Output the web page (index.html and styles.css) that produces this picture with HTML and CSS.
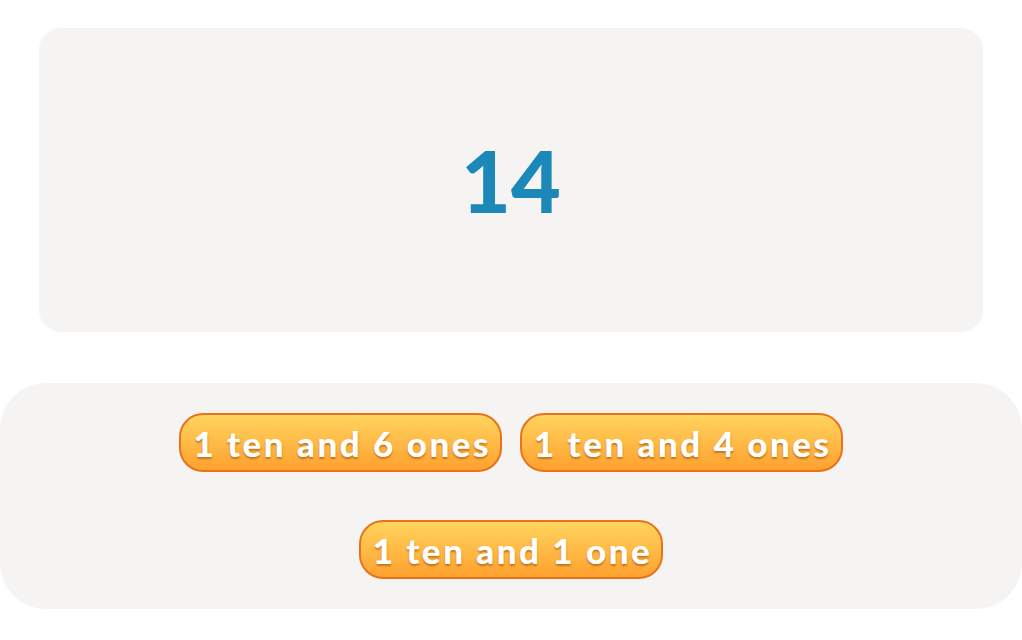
FILE: index.html
```html
<!DOCTYPE html>
<html lang="en">
<head>
<meta charset="utf-8">
<title>Place value</title>
<link rel="stylesheet" href="styles.css">
</head>
<body>
  <main class="page">
    <section class="prompt">
      <div class="number">14</div>
    </section>
    <section class="choices">
      <div class="row">
        <button class="choice">1 ten and 6 ones</button>
        <button class="choice">1 ten and 4 ones</button>
      </div>
      <div class="row">
        <button class="choice">1 ten and 1 one</button>
      </div>
    </section>
  </main>
</body>
</html>
```

FILE: styles.css
```css
html, body {
  margin: 0;
  padding: 0;
  background: #ffffff;
}

.page {
  width: 1022px;
  height: 640px;
  padding-top: 28px;
  box-sizing: border-box;
  font-family: "Lato", "Open Sans", sans-serif;
}

.prompt {
  margin: 0 39px;
  height: 304px;
  background: #f6f4f3;
  border-radius: 22px;
  display: flex;
  align-items: center;
  justify-content: center;
}

.number {
  font-size: 86px;
  font-weight: 900;
  color: #1b88b7;
  line-height: 1;
}

.choices {
  margin-top: 51px;
  height: 226px;
  background: #f6f4f3;
  border-radius: 46px;
  display: flex;
  flex-direction: column;
  align-items: center;
  padding-top: 30px;
  box-sizing: border-box;
  gap: 48px;
}

.row {
  display: flex;
  gap: 18px;
  justify-content: center;
}

.choice {
  height: 59px;
  padding: 0 9px 0 12px;
  border: 2.5px solid #e8731c;
  border-radius: 24px;
  background: linear-gradient(#ffd45e, #ffa12f);
  color: #ffffff;
  font-family: "Lato", "Open Sans", sans-serif;
  font-weight: 900;
  font-size: 35px;
  letter-spacing: 2.5px;
  text-shadow: 0 2px 2px rgba(150, 70, 0, 0.55);
  box-sizing: border-box;
  cursor: pointer;
}
```
